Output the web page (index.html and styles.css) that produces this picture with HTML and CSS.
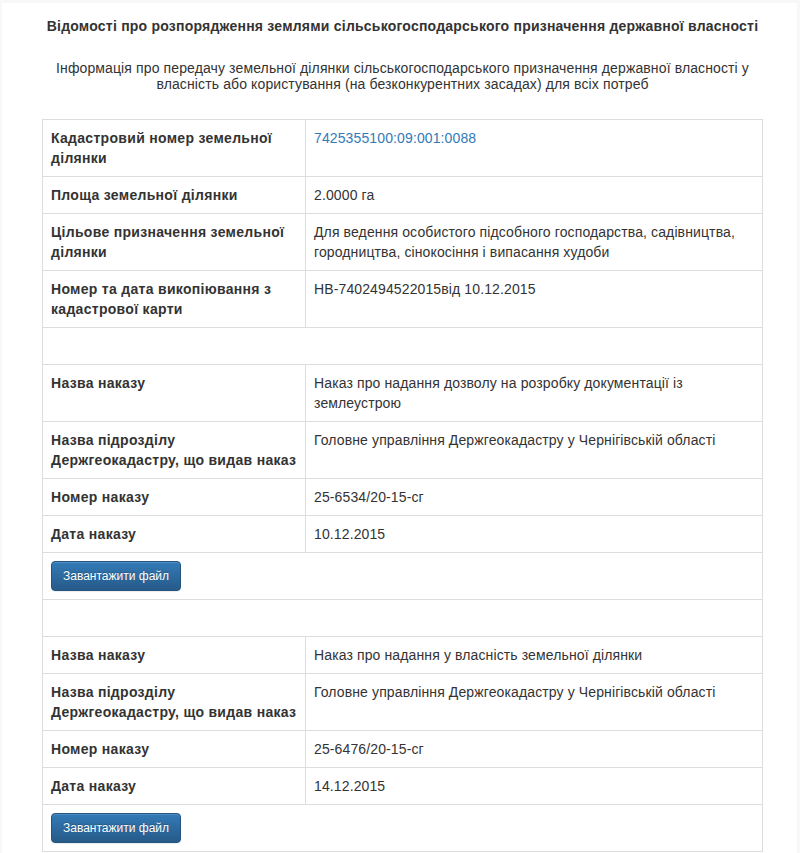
FILE: index.html
```html
<!DOCTYPE html>
<html lang="uk">
<head>
<meta charset="utf-8">
<title>Відомості про розпорядження землями</title>
<link rel="stylesheet" href="styles.css">
</head>
<body>
<div class="page">
  <div class="wrap">
    <h4 class="title">Відомості про розпорядження землями сільськогосподарського призначення державної власності</h4>
    <p class="subtitle">Інформація про передачу земельної ділянки сільськогосподарського призначення державної власності у власність або користування (на безконкурентних засадах) для всіх потреб</p>
    <table class="info">
      <tbody>
        <tr><th>Кадастровий номер земельної ділянки</th><td><a href="#">7425355100:09:001:0088</a></td></tr>
        <tr><th>Площа земельної ділянки</th><td>2.0000 га</td></tr>
        <tr><th>Цільове призначення земельної ділянки</th><td>Для ведення особистого підсобного господарства, садівництва, городництва, сінокосіння і випасання худоби</td></tr>
        <tr><th>Номер та дата викопіювання з кадастрової карти</th><td>НВ-7402494522015від 10.12.2015</td></tr>
        <tr><td class="empty" colspan="2">&nbsp;</td></tr>
        <tr><th>Назва наказу</th><td>Наказ про надання дозволу на розробку документації із землеустрою</td></tr>
        <tr><th>Назва підрозділу Держгеокадастру, що видав наказ</th><td>Головне управління Держгеокадастру у Чернігівській області</td></tr>
        <tr><th>Номер наказу</th><td>25-6534/20-15-сг</td></tr>
        <tr><th>Дата наказу</th><td>10.12.2015</td></tr>
        <tr><td colspan="2"><button class="btn" type="button">Завантажити файл</button></td></tr>
        <tr><td class="empty" colspan="2">&nbsp;</td></tr>
        <tr><th>Назва наказу</th><td>Наказ про надання у власність земельної ділянки</td></tr>
        <tr><th>Назва підрозділу Держгеокадастру, що видав наказ</th><td>Головне управління Держгеокадастру у Чернігівській області</td></tr>
        <tr><th>Номер наказу</th><td>25-6476/20-15-сг</td></tr>
        <tr><th>Дата наказу</th><td>14.12.2015</td></tr>
        <tr><td colspan="2"><button class="btn" type="button">Завантажити файл</button></td></tr>
      </tbody>
    </table>
  </div>
</div>
</body>
</html>
```
FILE: styles.css
```css
html, body {
  margin: 0;
  padding: 0;
  background: #f8f8f8;
}
body {
  font-family: "Liberation Sans", Arial, sans-serif;
  font-size: 14px;
  line-height: 20px;
  color: #333;
  letter-spacing: 0.12px;
}
.page {
  background: #fff;
  margin: 3px 3px 0 2px;
  padding: 13px 0 20px 40px;
  min-height: 860px;
  box-sizing: border-box;
}
.wrap {
  width: 721px;
}
.title {
  margin: 0;
  font-size: 14px;
  font-weight: bold;
  line-height: 20px;
  text-align: center;
  letter-spacing: 0.22px;
}
.subtitle {
  margin: 24px 0 0;
  font-size: 14px;
  line-height: 16px;
  text-align: center;
}
.info {
  margin-top: 27px;
  width: 721px;
  border-collapse: collapse;
  border: 1px solid #ddd;
}
.info th, .info td {
  border: 1px solid #ddd;
  padding: 8px;
  vertical-align: top;
  text-align: left;
  line-height: 20px;
}
.info th {
  width: 246px;
  font-weight: bold;
  letter-spacing: 0.3px;
}
.info a {
  color: #337ab7;
  text-decoration: none;
}
.btn {
  display: block;
  height: 30px;
  padding: 0 11px;
  font-family: "Liberation Sans", Arial, sans-serif;
  font-size: 12px;
  letter-spacing: 0;
  line-height: 28px;
  color: #fff;
  background: linear-gradient(#337ab7, #265a88);
  border: 1px solid #245580;
  border-radius: 4px;
  box-shadow: inset 0 1px 0 rgba(255,255,255,.15), 0 1px 1px rgba(0,0,0,.075);
  text-shadow: 0 -1px 0 rgba(0,0,0,.2);
  cursor: pointer;
}
```
